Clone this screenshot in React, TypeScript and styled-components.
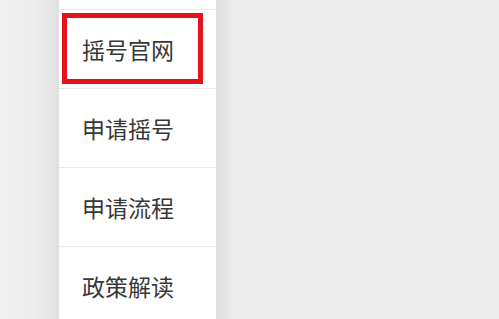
import React from "react";
import styled, { createGlobalStyle } from "styled-components";

const Global = createGlobalStyle`
  html, body { margin: 0; padding: 0; height: 100%; }
  body {
    background: #ececec;
    font-family: "Noto Sans CJK SC", "Noto Sans", sans-serif;
    overflow: hidden;
  }
  #root { height: 100%; }
`;

const Page = styled.div`
  display: flex;
  height: 100vh;
  overflow: hidden;
  background: repeating-linear-gradient(
    180deg,
    #ececec 0px,
    #ececec 8px,
    #ebebeb 8px,
    #ebebeb 10px
  );
`;

const Gutter = styled.div`
  width: 59px;
  flex: none;
  background: linear-gradient(90deg, #f0f0f0 0%, #ececec 60%, #e4e4e4 92%, #dedede 100%);
`;

const Shade = styled.div`
  width: 16px;
  flex: none;
  background: linear-gradient(90deg, #e0e0e0 0%, #e5e5e5 60%, #eaeaea 100%);
`;

const Rest = styled.div`
  flex: 1;
`;

const Menu = styled.ul`
  width: 157px;
  flex: none;
  margin: -69px 0 0;
  padding: 0;
  list-style: none;
  background: #ffffff;
  display: flex;
  flex-direction: column;
`;

const Item = styled.li`
  position: relative;
  height: 78px;
  flex: none;
  display: flex;
  align-items: center;
  padding-left: 23px;
  border-bottom: 1px solid #e9e9e9;
  font-size: 23px;
  font-weight: 400;
  color: #383838;
`;

const Highlight = styled.span`
  position: absolute;
  left: 3px;
  top: 3px;
  width: 141px;
  height: 71px;
  box-sizing: border-box;
  border: 5px solid #e3131b;
  pointer-events: none;
`;

const items = ["", "摇号官网", "申请摇号", "申请流程", "政策解读"];

export default function App() {
  return (
    <>
      <Global />
      <Page>
        <Gutter />
        <Menu>
          {items.map((label, i) => (
            <Item key={i}>
              {label}
              {i === 1 && <Highlight />}
            </Item>
          ))}
        </Menu>
        <Shade />
        <Rest />
      </Page>
    </>
  );
}
